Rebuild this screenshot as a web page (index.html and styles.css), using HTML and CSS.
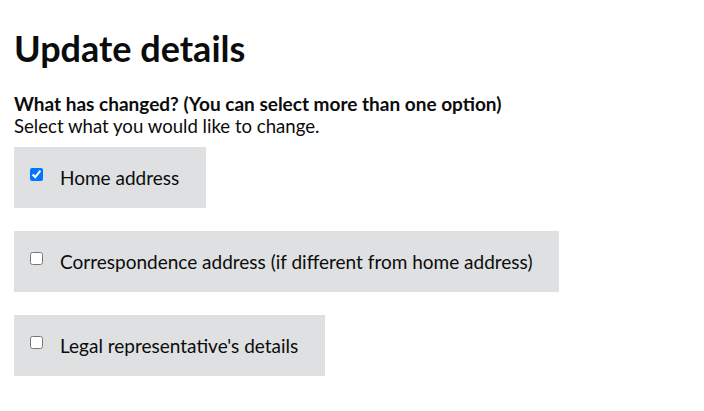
FILE: index.html
```html
<!DOCTYPE html>
<html lang="en">
  <head>
    <meta charset="UTF-8" />
    <meta name="viewport" content="width=device-width, initial-scale=1.0" />
    <title>Update details</title>
    <link rel="stylesheet" href="styles.css">
  </head>
  <body>
    <h1>Update details</h1>

    <fieldset class="changes">
      <legend>What has changed? (You can select more than one option)</legend>
      <p class="hint">Select what you would like to change.</p>

      <div class="option-list">
        <label class="option">
          <input type="checkbox" name="change" value="home" checked />
          <span>Home address</span>
        </label>
        <label class="option">
          <input type="checkbox" name="change" value="correspondence" />
          <span>Correspondence address (if different from home address)</span>
        </label>
        <label class="option">
          <input type="checkbox" name="change" value="legal" />
          <span>Legal representative's details</span>
        </label>
      </div>
    </fieldset>
  </body>
</html>
```

FILE: styles.css
```css
body {
  background-color: white;
  color: #0b0c0c;
  font-family: Lato, "Noto Sans", sans-serif;
  margin: 0;
  padding: 14px;
}
h1 {
  font-size: 36px;
  font-weight: 700;
  margin: 12px 0 22px;
}
.changes {
  border: none;
  margin: 0;
  padding: 0;
}
.changes legend {
  padding: 0;
  font-size: 19px;
  line-height: 23px;
  font-weight: 700;
}
.hint {
  margin: 0 0 10px;
  font-size: 18.6px;
  line-height: 22px;
}
.option-list {
  display: flex;
  flex-direction: column;
  align-items: flex-start;
  gap: 23px;
}
.option {
  display: inline-flex;
  align-items: center;
  height: 61px;
  box-sizing: border-box;
  padding: 0 27px 0 12px;
  background-color: #dee0e2;
  font-size: 19px;
}
.option input {
  margin: 0 17px 6px 4px;
}
```
